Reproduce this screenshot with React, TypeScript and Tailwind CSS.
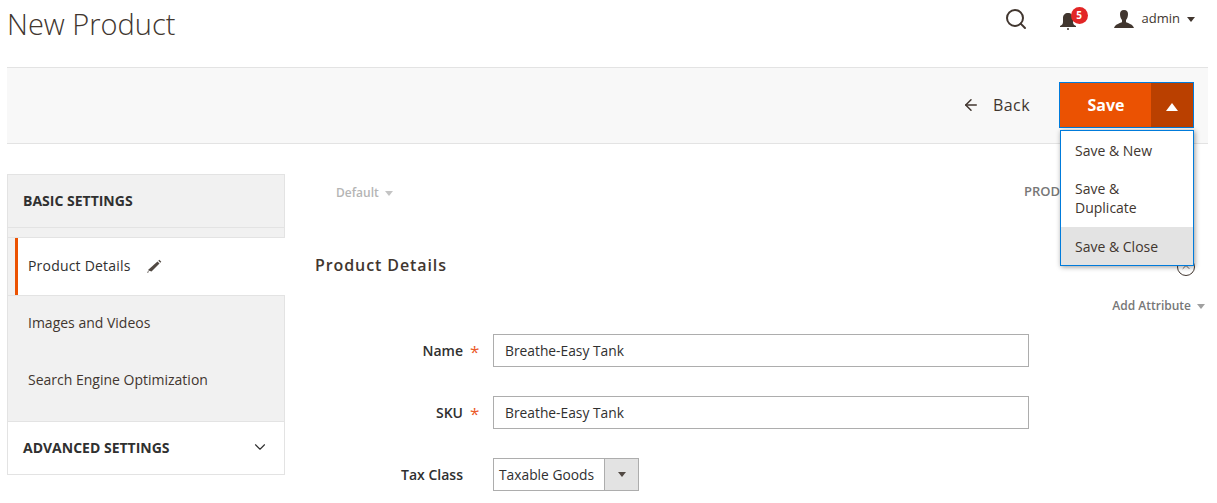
import { ArrowLeft, ChevronDown, ChevronUp, Search } from "lucide-react";

function Field({ label, value, required }: { label: string; value: string; required?: boolean }) {
  return (
    <div className="flex items-center h-[33px]">
      <label className="w-[178px] text-right text-[14px] font-semibold text-[#303030]">{label}</label>
      <span className="w-[30px] h-full pl-[7px] pt-[6px] text-[17px] leading-[24px] text-[#eb5a2a]">{required ? "*" : ""}</span>
      <div className="w-[536px] h-[33px] border border-[#adadad] bg-white pl-[11px] pt-[2px] flex items-center text-[13.8px] text-[#303030]">
        {value}
      </div>
    </div>
  );
}

function Caret({ className }: { className: string }) {
  return <span className={`w-0 h-0 border-x-[4px] border-x-transparent border-t-[5px] ${className}`} />;
}

export default function App() {
  return (
    <div className="relative w-[1217px] h-[503px] overflow-hidden bg-white font-['Open_Sans',sans-serif] text-[#41362f]">
      <div className="w-[1208px] pl-[7px]">
        {/* top header */}
        <header className="h-[68px] border-b border-[#e3e3e3] flex items-start justify-between">
          <h1 className="text-[29px] leading-[47px] font-light text-[#41362f]">New Product</h1>
          <div className="flex items-center pr-[13px] h-[38px]">
            <Search size={24} strokeWidth={2} className="text-[#41362f] mr-[32px]" />
            <div className="relative mr-[38px] mt-[3px]">
              <svg width="16" height="18" viewBox="0 0 16 18" className="block fill-[#41362f]">
                <path d="M8 1c-3 0-5 2-5 5v4c0 2-1 3-3 4v1h16v-1c-2-1-3-2-3-4V6c0-3-2-5-5-5z" />
                <circle cx="8" cy="17" r="1" />
              </svg>
              <span className="absolute -top-[5px] left-[11px] w-[17px] h-[17px] rounded-full bg-[#e22626] text-white text-[10px] font-bold flex items-center justify-center">
                5
              </span>
            </div>
            <svg width="20" height="18" viewBox="0 0 20 18" className="fill-[#41362f] mr-[8px] -mt-[1px]">
              <path d="M10 0c-3 0-4 2-4 4 0 3 1 5 2 6v2c-1 1-7 2-8 6h20c-1-4-7-5-8-6v-2c1-1 2-3 2-6 0-2-1-4-4-4z" />
            </svg>
            <span className="text-[13px] text-[#41362f] mr-[7px] -mt-[1px]">admin</span>
            <Caret className="border-t-[#41362f]" />
          </div>
        </header>

        {/* action bar */}
        <div className="h-[76px] bg-[#f8f8f8] border-b border-[#e3e3e3] flex items-start justify-end pt-[14px] pr-[14px]">
          <div className="flex items-center h-[46px] mr-[29px] text-[#41362f]">
            <ArrowLeft size={18} strokeWidth={2} className="mr-[13px]" />
            <span className="text-[16px] tracking-[0.4px]">Back</span>
          </div>
          <div className="flex w-[135px] h-[46px] border border-[#007bdb]">
            <div className="flex-1 pl-[1px] bg-[#eb5202] text-white text-[16px] font-bold flex items-center justify-center">
              Save
            </div>
            <div className="w-[42px] bg-[#ba4000] flex items-center justify-center">
              <span className="w-0 h-0 border-x-[6px] border-x-transparent border-b-[8px] border-b-white mt-[3px]" />
            </div>
          </div>
        </div>

        {/* page body */}
        <div className="flex pt-[30px]">
          <aside className="w-[278px] shrink-0">
            <div className="bg-[#f1f1f1] border border-[#e3e3e3] border-b-0 pb-[10px]">
              <div className="h-[53px] pl-[15px] pb-[2px] flex items-center border-b border-[#e3e3e3] text-[14px] font-bold text-[#303030]">
                BASIC SETTINGS
              </div>
              <div className="h-[10px] border-b border-[#e3e3e3]" />
              <div className="h-[57px] ml-[7px] -mr-px pb-[2px] bg-white border-l-[3px] border-[#eb5202] flex items-center pl-[10px] text-[14px] font-medium tracking-[0.2px] text-[#303030]">
                Product Details
                <svg width="16" height="16" viewBox="0 0 16 16" className="ml-[15px] fill-[#514943]">
                  <path d="M11.5 3.5l2 2-8 8-3-1-.5-.5z" />
                  <path d="M12.3 2.7l1-1 2 2-1 1zM2 13l-1 2 2-1z" />
                </svg>
              </div>
              <div className="border-t border-[#e3e3e3] h-[54px] pl-[20px] flex items-center text-[14px] text-[#41362f]">
                Images and Videos
              </div>
              <div className="h-[62px] pl-[20px] pb-[2px] flex items-center text-[14px] text-[#41362f]">
                Search Engine Optimization
              </div>
            </div>
            <div className="h-[54px] border border-[#e3e3e3] bg-white px-[15px] pb-[2px] flex items-center justify-between text-[14px] font-bold text-[#303030]">
              ADVANCED SETTINGS
              <ChevronDown size={18} strokeWidth={1.5} />
            </div>
          </aside>

          <main className="flex-1 min-w-0">
            <div className="flex items-center justify-between h-[36px]">
              <div className="flex items-center pl-[51px] pt-[2px] text-[12px] font-semibold text-[#b5b5b5]">
                Default
                <Caret className="ml-[6px] border-t-[#c4c4c4]" />
              </div>
              <span className="mr-[148px] text-[13px] font-semibold text-[#777777]">PROD</span>
            </div>
            <div className="flex items-center justify-between mt-[37px] pl-[30px] h-[36px]">
              <h2 className="text-[16px] font-semibold tracking-[0.9px] text-[#41362f]">Product Details</h2>
              <span className="w-[18px] h-[18px] rounded-full border border-[#41362f] flex items-center justify-center mr-[13px] mt-[4px]">
                <ChevronUp size={12} strokeWidth={1.5} />
              </span>
            </div>
            <div className="flex items-center justify-end h-[20px] mt-[13px] pr-[3px] text-[12px] font-semibold text-[#777777]">
              Add Attribute
              <Caret className="ml-[6px] border-t-[#a0a0a0]" />
            </div>
            <div className="mt-[18px] flex flex-col gap-[29px]">
              <Field label="Name" value="Breathe-Easy Tank" required />
              <Field label="SKU" value="Breathe-Easy Tank" required />
              <div className="flex items-center h-[33px]">
                <label className="w-[178px] text-right text-[14px] font-semibold text-[#303030]">Tax Class</label>
                <span className="w-[30px]" />
                <div className="w-[146px] h-[33px] border border-[#adadad] flex items-center text-[13.8px] text-[#303030]">
                  <span className="flex-1 pl-[5px] pt-[2px]">Taxable Goods</span>
                  <span className="w-[34px] h-full bg-[#e3e3e3] border-l border-[#adadad] flex items-center justify-center">
                    <Caret className="border-t-[#514943]" />
                  </span>
                </div>
              </div>
            </div>
          </main>
        </div>
      </div>

      {/* save dropdown */}
      <div className="absolute left-[1060px] top-[130px] w-[134px] h-[136px] border border-[#007bdb] bg-white shadow-[1px_1px_5px_rgba(0,0,0,0.4)] text-[14px] text-[#41362f]">
        <div className="h-[39px] pl-[14px] flex items-center">Save &amp; New</div>
        <div className="h-[57px] pl-[14px] pb-[2px] flex items-center leading-[19px]">
          <span>
            Save &amp;
            <br />
            Duplicate
          </span>
        </div>
        <div className="h-[38px] pl-[14px] bg-[#e3e3e3] flex items-center">Save &amp; Close</div>
      </div>
    </div>
  );
}
